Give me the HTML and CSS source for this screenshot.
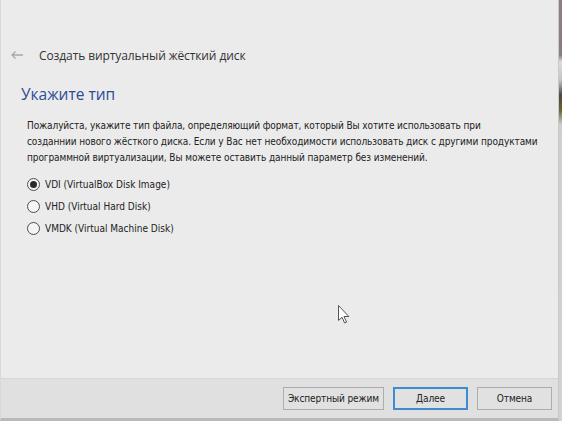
FILE: index.html
```html
<!DOCTYPE html>
<html lang="ru">
<head>
<meta charset="utf-8">
<title>Создать виртуальный жёсткий диск</title>
<link rel="stylesheet" href="styles.css">
</head>
<body>
<div class="screen">
  <div class="dialog">
    <div class="header">
      <svg class="back" width="14" height="10" viewBox="0 0 14 10"><path d="M13 5H2M5.5 1.5L2 5l3.5 3.5" fill="none" stroke="#a9a9a9" stroke-width="1.3"/></svg>
      <span class="title">Создать виртуальный жёсткий диск</span>
    </div>
    <div class="content">
      <h1 class="heading">Укажите тип</h1>
      <p class="desc">Пожалуйста, укажите тип файла, определяющий формат, который Вы хотите использовать при<br>созданнии нового жёсткого диска. Если у Вас нет необходимости использовать диск с другими продуктами<br>программной виртуализации, Вы можете оставить данный параметр без изменений.</p>
      <div class="options">
        <label class="opt"><span class="radio checked"></span>VDI (VirtualBox Disk Image)</label>
        <label class="opt"><span class="radio"></span>VHD (Virtual Hard Disk)</label>
        <label class="opt"><span class="radio"></span>VMDK (Virtual Machine Disk)</label>
      </div>
      <svg class="cursor" width="12" height="19" viewBox="0 0 12 19"><path d="M0.5 0.5V15.5L4 12.2L6.6 18L8.6 17.1L6 11.5H10.8Z" fill="#fff" stroke="#555" stroke-width="1"/></svg>
    </div>
    <div class="footer">
      <button class="btn">Экспертный режим</button>
      <button class="btn primary">Далее</button>
      <button class="btn">Отмена</button>
    </div>
  </div>
  <div class="edge"></div>
</div>
</body>
</html>
```
FILE: styles.css
```css
html, body {
  margin: 0;
  padding: 0;
}
body {
  width: 562px;
  height: 421px;
  overflow: hidden;
  background: #ebebeb;
}
.screen {
  display: flex;
  width: 562px;
  height: 421px;
}
.dialog {
  width: 557px;
  height: 418px;
  display: flex;
  flex-direction: column;
  background: #ebebeb;
  border-left: 1px solid #d8d8d8;
  border-bottom: 3px solid #b9b9b9;
  border-right: 1px solid #c9c9c9;
}
.edge {
  width: 3px;
  height: 421px;
  background: linear-gradient(#8d7e80 0, #8a7c7e 55px, #d8dde6 62px, #c4c4c4 80px, #4a4a42 95px, #6b6230 110px, #cfcfcf 125px, #d2d2d2 421px);
}
.header {
  display: flex;
  align-items: center;
  padding: 47px 0 0 9px;
  height: 16px;
}
.back {
  margin-right: 15px;
}
.title {
  font-family: "Open Sans", "Noto Sans", sans-serif;
  font-size: 12px;
  color: #333;
  letter-spacing: -0.1px;
}
.content {
  position: relative;
  flex: 1;
  padding: 0 0 0 20px;
}
.heading {
  margin: 20px 0 0 0;
  font-family: "Open Sans", "Noto Sans", sans-serif;
  font-weight: normal;
  font-size: 15.5px;
  line-height: 22px;
  color: #2c4c93;
}
.desc {
  margin: 13px 0 0 6px;
  font-family: "DejaVu Sans Condensed", "DejaVu Sans", sans-serif;
  font-size: 10px;
  letter-spacing: -0.1px;
  line-height: 16px;
  color: #222;
  white-space: nowrap;
}
.options {
  display: flex;
  flex-direction: column;
  margin: 7px 0 0 6px;
}
.opt {
  display: flex;
  align-items: center;
  height: 22px;
  font-family: "DejaVu Sans Condensed", "DejaVu Sans", sans-serif;
  font-size: 10px;
  letter-spacing: 0;
  color: #222;
}
.radio {
  box-sizing: border-box;
  width: 13px;
  height: 13px;
  border: 1px solid #4d4d4d;
  border-radius: 50%;
  background: #f4f4f4;
  margin-right: 5px;
  display: flex;
  align-items: center;
  justify-content: center;
}
.radio.checked::after {
  content: "";
  width: 7px;
  height: 7px;
  border-radius: 50%;
  background: #2a2a2a;
}
.cursor {
  position: absolute;
  left: 337px;
  top: 242px;
}
.footer {
  height: 39px;
  background: #e0e0e0;
  border-top: 1px solid #d6d6d6;
  display: flex;
  align-items: center;
  justify-content: flex-end;
  gap: 9px;
  padding-right: 6px;
}
.btn {
  box-sizing: border-box;
  height: 23px;
  min-width: 75px;
  padding: 0 4px;
  background: #e1e1e1;
  border: 1px solid #adadad;
  font-family: "DejaVu Sans Condensed", "DejaVu Sans", sans-serif;
  font-size: 10px;
  letter-spacing: -0.1px;
  color: #222;
  margin: 0;
}
.btn.primary {
  border: 2px solid #3f8bd2;
}
```
